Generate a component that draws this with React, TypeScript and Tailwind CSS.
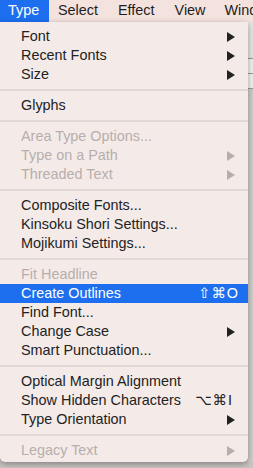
import React from "react";

type Item =
  | { sep: true }
  | { label: string; disabled?: boolean; sub?: boolean; shortcut?: string; active?: boolean; sep?: false };

const items: Item[] = [
  { label: "Font", sub: true },
  { label: "Recent Fonts", sub: true },
  { label: "Size", sub: true },
  { sep: true },
  { label: "Glyphs" },
  { sep: true },
  { label: "Area Type Options...", disabled: true },
  { label: "Type on a Path", disabled: true, sub: true },
  { label: "Threaded Text", disabled: true, sub: true },
  { sep: true },
  { label: "Composite Fonts..." },
  { label: "Kinsoku Shori Settings..." },
  { label: "Mojikumi Settings..." },
  { sep: true },
  { label: "Fit Headline", disabled: true },
  { label: "Create Outlines", shortcut: "⇧⌘O", active: true },
  { label: "Find Font..." },
  { label: "Change Case", sub: true },
  { label: "Smart Punctuation..." },
  { sep: true },
  { label: "Optical Margin Alignment" },
  { label: "Show Hidden Characters", shortcut: "⌥⌘I" },
  { label: "Type Orientation", sub: true },
  { sep: true },
  { label: "Legacy Text", disabled: true, sub: true },
];

function Arrow({ color }: { color: string }) {
  return (
    <svg width="8" height="10" viewBox="0 0 8 10" className="shrink-0">
      <path d="M0 0 L8 5 L0 10 Z" fill={color} />
    </svg>
  );
}

export default function App() {
  return (
    <div
      className="w-[253px] h-[468px] overflow-hidden bg-[#c9c5c4] relative"
      style={{ fontFamily: '"Liberation Sans", "DejaVu Sans", sans-serif' }}
    >
      {/* menubar */}
      <div className="h-[22px] flex items-center bg-[#f4e2df] text-[14.4px] text-[#1e1e1e] whitespace-nowrap overflow-hidden">
        <div className="h-full px-[8px] flex items-center bg-[#1d6ff0] text-white w-[49px] shrink-0">Type</div>
        <div className="ml-[9px]">Select</div>
        <div className="ml-[20px]">Effect</div>
        <div className="ml-[20px]">View</div>
        <div className="ml-[19px]">Wind</div>
      </div>

      <div className="flex">
        {/* menu */}
        <div className="w-[248px] shrink-0 bg-[#f4ebe9] rounded-b-[5px] shadow-[0_2px_6px_rgba(0,0,0,0.35)] pt-[5px] pb-[2px] relative z-10">
          {items.map((it, i) =>
            it.sep ? (
              <div key={i} className="my-[5px] h-[2px] bg-[#e1d8d6]" />
            ) : (
              <div
                key={i}
                className={
                  "h-[19px] flex items-center pl-[21px] pr-[13px] text-[14.4px] whitespace-nowrap " +
                  (it.active
                    ? "bg-[#1d6ff0] text-white"
                    : it.disabled
                    ? "text-[#b7aeac]"
                    : "text-[#222222]")
                }
              >
                <span className="flex-1">{it.label}</span>
                {it.shortcut && (
                  <span className={"tracking-[1px] " + (it.active ? "-mr-[4px]" : "mr-[2px]")}>
                    {it.shortcut}
                  </span>
                )}
                {it.sub && <Arrow color={it.disabled ? "#b7aeac" : "#222222"} />}
              </div>
            )
          )}
        </div>

        {/* background window peeking out */}
        <div className="flex-1 flex flex-col">
          <div className="h-[36px] bg-[#e7e3e2]" />
          <div className="h-px bg-[#9b9898]" />
          <div className="h-[14px] bg-[#f3f1f0]" />
          <div className="h-px bg-[#9b9898]" />
          <div className="h-[14px] bg-[#f3f1f0]" />
          <div className="h-px bg-[#9b9898]" />
          <div className="flex-1 bg-[#cfcbca]" />
        </div>
      </div>
    </div>
  );
}
